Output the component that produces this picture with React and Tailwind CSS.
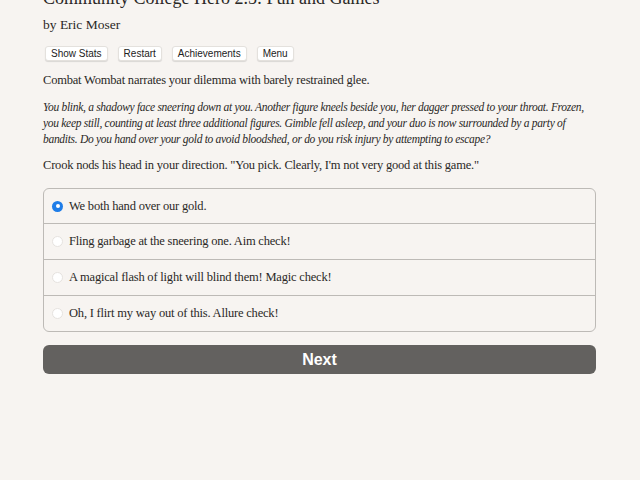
import { useState } from 'react';

const serif = { fontFamily: '"Liberation Serif", "Times New Roman", serif' };

const choices = [
  'We both hand over our gold.',
  'Fling garbage at the sneering one. Aim check!',
  'A magical flash of light will blind them! Magic check!',
  'Oh, I flirt my way out of this. Allure check!',
];

const narration = [
  'You blink, a shadowy face sneering down at you. Another figure kneels beside you, her dagger pressed to your throat. Frozen,',
  'you keep still, counting at least three additional figures. Gimble fell asleep, and your duo is now surrounded by a party of',
  'bandits. Do you hand over your gold to avoid bloodshed, or do you risk injury by attempting to escape?',
];

function MenuButton({ children }) {
  return (
    <button className="h-[15px] px-[5px] bg-white rounded-[3px] border border-[#e4e1dd] shadow-[0_1px_1px_rgba(0,0,0,0.12)] text-[10px] leading-none text-[#222] font-['Liberation_Sans',Arial,sans-serif]">
      {children}
    </button>
  );
}

export default function App() {
  const [picked, setPicked] = useState(0);

  return (
    <div className="min-h-screen bg-[#f7f4f1] text-[#2a2826] overflow-hidden" style={serif}>
      <div className="w-[553px] ml-[43px] -mt-[13px]">
        <h1 className="text-[18px] leading-[22px] whitespace-nowrap">Community College Hero 2.5: Fun and Games</h1>
        <p className="mt-[7px] text-[13.5px] leading-[18px]">by Eric Moser</p>

        <div className="mt-[12px] ml-[2px] flex gap-[10px]">
          <MenuButton>Show Stats</MenuButton>
          <MenuButton>Restart</MenuButton>
          <MenuButton>Achievements</MenuButton>
          <MenuButton>Menu</MenuButton>
        </div>

        <p className="mt-[10px] text-[12.5px] leading-[18px] tracking-[-0.2px]">
          Combat Wombat narrates your dilemma with barely restrained glee.
        </p>
        <p className="mt-[10px] text-[11.5px] leading-[16px] tracking-[-0.3px] italic">
          {narration.map((line) => (
            <span key={line} className="block whitespace-nowrap">{line}</span>
          ))}
        </p>
        <p className="mt-[9px] text-[12.5px] leading-[18px] tracking-[-0.2px]">
          Crook nods his head in your direction. "You pick. Clearly, I'm not very good at this game."
        </p>

        <div className="mt-[14px] border border-[#bdbab6] rounded-[6px] overflow-hidden">
          {choices.map((c, i) => (
            <label
              key={c}
              className={`flex items-center pl-[8px] cursor-pointer ${i > 0 ? 'h-[36px] border-t border-[#bdbab6]' : 'h-[34px]'}`}
              onClick={() => setPicked(i)}
            >
              {picked === i ? (
                <span className="w-[11px] h-[11px] rounded-full bg-[#1f7de8] flex items-center justify-center">
                  <span className="w-[4px] h-[4px] rounded-full bg-white" />
                </span>
              ) : (
                <span className="w-[11px] h-[11px] rounded-full bg-white border border-[#e6e3df]" />
              )}
              <span className="ml-[6px] text-[12.5px] tracking-[-0.2px]">{c}</span>
            </label>
          ))}
        </div>

        <button className="mt-[13px] w-full h-[29px] rounded-[6px] bg-[#63615f] text-white text-[16px] font-bold font-['Liberation_Sans',Arial,sans-serif]">
          Next
        </button>
      </div>
    </div>
  );
}
